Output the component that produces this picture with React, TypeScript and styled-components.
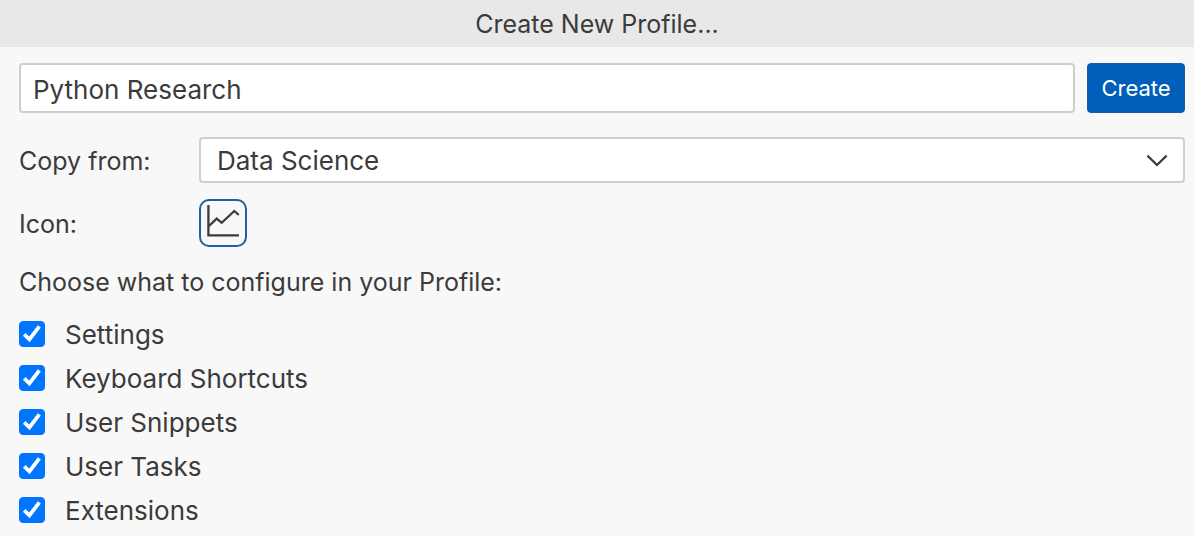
import React, { useState } from "react";
import styled, { createGlobalStyle } from "styled-components";

const GlobalStyle = createGlobalStyle`
  *, *::before, *::after { box-sizing: border-box; }
  body {
    margin: 0;
    background: #f8f8f8;
    color: #3b3b3b;
    font-family: Inter, "Liberation Sans", sans-serif;
    font-size: 25px;
    line-height: 30px;
  }
  input, select, button { font: inherit; color: inherit; margin: 0; }
`;

const Header = styled.header`
  background: #e8e8e8;
  padding: 9px 16px 8px;
  text-align: center;
`;

const Title = styled.h1`
  margin: 0;
  font-size: 25px;
  font-weight: 400;
`;

const Form = styled.form`
  display: flex;
  flex-direction: column;
  padding: 16px 9px 12px 19px;
`;

const NameRow = styled.div`
  display: flex;
  gap: 12px;
  margin-bottom: 24px;
`;

const NameInput = styled.input`
  flex: 1;
  min-width: 0;
  height: 50px;
  padding: 2px 12px 0;
  border: 2px solid #cecece;
  border-radius: 4px;
  background: #fff;
  font-size: 26px;
  outline: none;
`;

const CreateButton = styled.button`
  width: 98px;
  height: 50px;
  padding: 0;
  border: 1px solid #1a5a9e;
  border-radius: 4px;
  background: #005fb8;
  color: #fff;
  font-size: 22px;
`;

const FieldRow = styled.div`
  display: grid;
  grid-template-columns: 180px 1fr;
  align-items: center;
  margin-bottom: 16px;
`;

const FieldLabel = styled.label`
  padding-top: 2px;
`;

const SelectBox = styled.div`
  display: grid;
  align-items: center;

  > * { grid-area: 1 / 1; }
  > svg { justify-self: end; margin-right: 16px; pointer-events: none; }
`;

const Select = styled.select`
  appearance: none;
  width: 100%;
  height: 46px;
  padding: 2px 48px 0 16px;
  border: 2px solid #cecece;
  border-radius: 4px;
  background: #fff;
  font-size: 26px;
  outline: none;
`;

const IconButton = styled.button`
  display: block;
  width: 48px;
  height: 48px;
  padding: 0;
  border: 2px solid #1a62a5;
  border-radius: 10px;
  background: transparent;

  > svg { display: block; }
`;

const Options = styled.fieldset`
  display: flex;
  flex-direction: column;
  min-width: 0;
  margin: 4px 0 0;
  padding: 0;
  border: 0;
`;

const Legend = styled.legend`
  padding: 0;
  margin-bottom: 15px;
`;

const Option = styled.label`
  display: flex;
  align-items: center;
  gap: 20px;
  height: 44px;
  font-size: 26px;
`;

const OptionText = styled.span`
  padding-top: 2px;
`;

const TickBox = styled.span`
  display: grid;
  width: 26px;
  height: 26px;

  > * { grid-area: 1 / 1; }
  > svg { pointer-events: none; visibility: hidden; }
  > input:checked + svg { visibility: visible; }
`;

const Tick = styled.input`
  appearance: none;
  width: 26px;
  height: 26px;
  border-radius: 4px;
  border: 1px solid #767676;
  background: #fff;

  &:checked { background: #0075ff; border-color: #0075ff; }
`;

const ChartIcon = () => (
  <svg width="44" height="44" viewBox="0 0 44 44" fill="none" stroke="#3b3b3b" strokeWidth="2.3" aria-hidden="true">
    <path d="M7.4 4V34.4H38" />
    <path d="M8 25L15.7 17.6L20.7 21.8L33.3 10L37.8 14" />
  </svg>
);

const ChevronIcon = () => (
  <svg width="24" height="24" viewBox="0 0 24 24" fill="none" stroke="#3b3b3b" strokeWidth="2.2" aria-hidden="true">
    <path d="M2.4 7.6L12 17L21.6 7.6" />
  </svg>
);

const CheckIcon = () => (
  <svg width="26" height="26" viewBox="0 0 26 26" fill="none" stroke="#fff" strokeWidth="3.8" aria-hidden="true">
    <path d="M5.2 13.4L10.4 18.4L20.4 5.4" />
  </svg>
);

const parts = ["Settings", "Keyboard Shortcuts", "User Snippets", "User Tasks", "Extensions"];

export default function App() {
  const [name, setName] = useState("Python Research");
  return (
    <>
      <GlobalStyle />
      <Header>
        <Title>Create New Profile...</Title>
      </Header>
      <Form onSubmit={(e: React.FormEvent) => e.preventDefault()}>
        <NameRow>
          <NameInput aria-label="Profile name" value={name} onChange={(e) => setName(e.target.value)} />
          <CreateButton type="submit">Create</CreateButton>
        </NameRow>
        <FieldRow>
          <FieldLabel htmlFor="copy-from">Copy from:</FieldLabel>
          <SelectBox>
            <Select id="copy-from" defaultValue="Data Science">
              <option>Data Science</option>
            </Select>
            <ChevronIcon />
          </SelectBox>
        </FieldRow>
        <FieldRow>
          <FieldLabel htmlFor="profile-icon">Icon:</FieldLabel>
          <IconButton id="profile-icon" type="button">
            <ChartIcon />
          </IconButton>
        </FieldRow>
        <Options>
          <Legend>Choose what to configure in your Profile:</Legend>
          {parts.map((part) => (
            <Option key={part}>
              <TickBox>
                <Tick type="checkbox" defaultChecked />
                <CheckIcon />
              </TickBox>
              <OptionText>{part}</OptionText>
            </Option>
          ))}
        </Options>
      </Form>
    </>
  );
}
